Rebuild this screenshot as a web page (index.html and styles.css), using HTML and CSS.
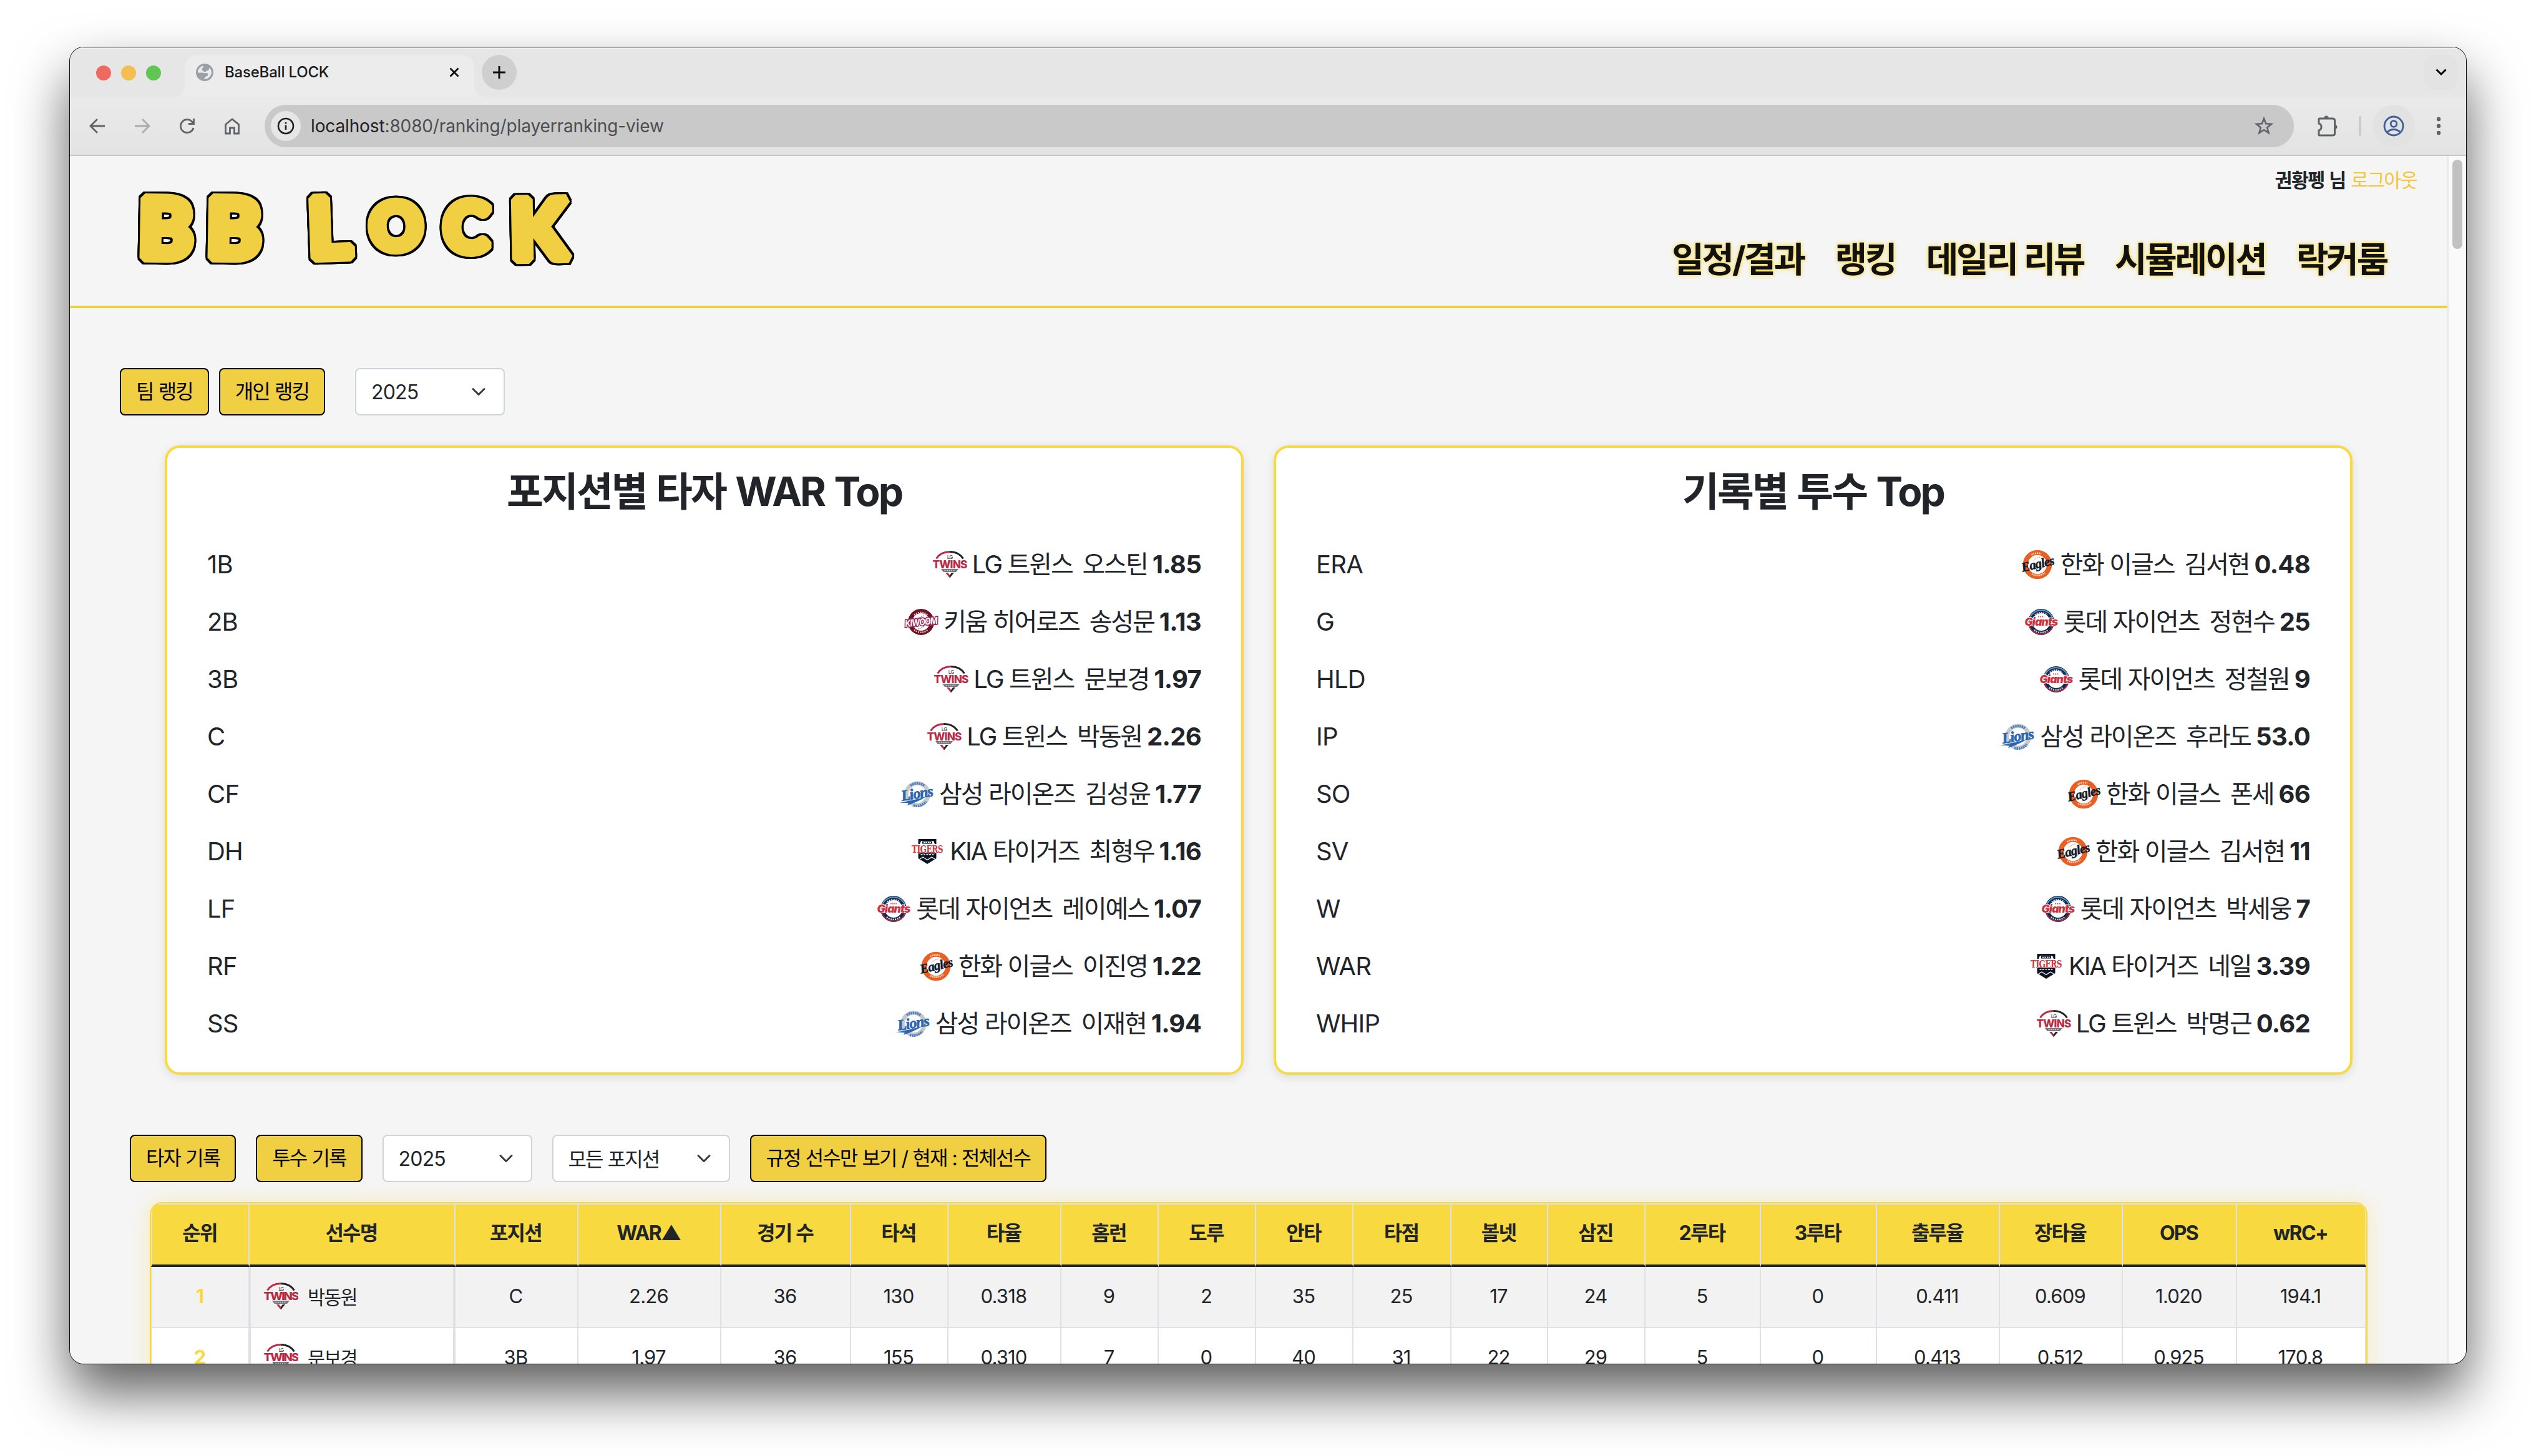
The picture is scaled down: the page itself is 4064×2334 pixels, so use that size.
FILE: index.html
```html
<!DOCTYPE html>
<html lang="ko">
<head>
<meta charset="utf-8">
<title>BaseBall LOCK</title>
<link rel="stylesheet" href="styles.css">
</head>
<body>
<svg class="defs" width="0" height="0" aria-hidden="true">
  <symbol id="twins" viewBox="0 0 56 48">
    <path d="M6.500 14.500C11 7.500 19 3.500 28 3.500" fill="none" stroke="#b72b45" stroke-width="3"/>
    <path d="M28 3.500C37 3.500 45 7.500 49.500 14.500" fill="none" stroke="#222" stroke-width="3"/>
    <text x="28" y="15" font-size="8" text-anchor="middle" fill="#333">LG</text>
    <text x="0.500" y="29.500" font-size="17" font-weight="800" textLength="55" lengthAdjust="spacingAndGlyphs" fill="#b72b45">TWINS</text>
    <path d="M14 31H42L38 36H18Z" fill="#75787b"/>
    <path d="M19.500 33.500H36.500" stroke="#c9cbcc" stroke-width="1.500" stroke-dasharray="2 1.500"/>
    <path d="M21 37H25L28 41V45.500Z" fill="#b72b45"/>
    <path d="M35 37H31L28 41V45.500Z" fill="#222"/>
  </symbol>
  <symbol id="kiwoom" viewBox="0 0 56 48">
    <circle cx="28" cy="24" r="17.500" fill="#fff" stroke="#6d1222" stroke-width="7"/>
    <path d="M17 13A16.500 16.500 0 0 1 39 13M17 36.500A16.500 16.500 0 0 0 39 36.500" fill="none" stroke="#d9b9be" stroke-width="2.500" stroke-dasharray="2 1.500"/>
    <path d="M33 14Q26 16 21 20M35 29Q30 34 23 35" fill="none" stroke="#c98a94" stroke-width="1.500" stroke-dasharray="2 1"/>
    <text x="2" y="29.500" font-size="15" font-weight="700" font-style="italic" textLength="52" lengthAdjust="spacingAndGlyphs" fill="#fff" stroke="#9c2458" stroke-width="3.400" paint-order="stroke" transform="rotate(-6 28 24)">KIWOOM</text>
  </symbol>
  <symbol id="lions" viewBox="0 0 56 48">
    <circle cx="29" cy="24" r="17.500" fill="#fff" stroke="#c6c8ca" stroke-width="6.500"/>
    <path d="M18 10.500A18 18 0 0 1 40 10.500M23 42A18 18 0 0 0 43 36" fill="none" stroke="#4d80c0" stroke-width="4" stroke-dasharray="2.500 1"/>
    <text class="script" x="3" y="31" font-size="24" font-weight="700" font-style="italic" textLength="51" lengthAdjust="spacingAndGlyphs" fill="#2a66b1" stroke="#2a66b1" stroke-width="0.800" transform="rotate(-9 28 24)">Lions</text>
    <path d="M0.500 37.500Q24 34 44 27.500Q31 36 13 42L15 38.500Z" fill="#2a66b1"/>
  </symbol>
  <symbol id="tigers" viewBox="0 0 56 48">
    <path d="M13.500 4H42.500V12H40L38 7H18L16 12H13.500Z" fill="#0c1524"/>
    <path d="M20 9.500H36" stroke="#0c1524" stroke-width="4"/>
    <path d="M22 9.500H34" stroke="#fff" stroke-width="1.500" stroke-dasharray="2.500 1"/>
    <path d="M13.500 26Q28 22 42.500 26V35L28 44L13.500 35Z" fill="#0c1524"/>
    <path d="M16 36L21 33L28 37.500L35 33L40 36" fill="none" stroke="#fff" stroke-width="1.200"/>
    <path d="M17.500 29H38.500" stroke="#fff" stroke-width="1.500" stroke-dasharray="3 1.500"/>
    <text class="slab" x="3" y="25.500" font-size="16" font-weight="700" textLength="50" lengthAdjust="spacingAndGlyphs" fill="#d8343f" stroke="#fff" stroke-width="1.500" paint-order="stroke">TIGERS</text>
  </symbol>
  <symbol id="giants" viewBox="0 0 56 48">
    <circle cx="28" cy="24" r="17.500" fill="#fff" stroke="#13294b" stroke-width="7"/>
    <path d="M9.500 18A19.800 19.800 0 0 1 46.500 18" fill="none" stroke="#5b9bd0" stroke-width="2"/>
    <path d="M9.500 31A19.800 19.800 0 0 0 46.500 31" fill="none" stroke="#b5263a" stroke-width="2"/>
    <path d="M18 13A15.500 15.500 0 0 1 38 13M17 37A17 17 0 0 0 39 37" fill="none" stroke="#d5dbe4" stroke-width="2.500" stroke-dasharray="2 1.500"/>
    <path d="M23 15.500H33" stroke="#d96a74" stroke-width="2" stroke-dasharray="2 1"/>
    <text x="1.500" y="30" font-size="17" font-weight="900" font-style="italic" textLength="53" lengthAdjust="spacingAndGlyphs" fill="#cf2f40" stroke="#fff" stroke-width="2" paint-order="stroke">Giants</text>
  </symbol>
  <symbol id="eagles" viewBox="0 0 56 48">
    <circle cx="28" cy="24" r="19.200" fill="#fff" stroke="#ea6024" stroke-width="8"/>
    <path d="M18.500 8.500A18.500 18.500 0 0 1 34 6.500M19 39A18.500 18.500 0 0 0 40 37" fill="none" stroke="#fbd3bf" stroke-width="2.500" stroke-dasharray="2 1"/>
    <path d="M32 12Q26 13 21 18M38 28Q33 32 25 36" fill="none" stroke="#f2b79b" stroke-width="1.500" stroke-dasharray="2 1"/>
    <text class="script" x="2" y="30" font-size="21" font-weight="700" font-style="italic" textLength="53" lengthAdjust="spacingAndGlyphs" fill="#0b1b2d" stroke="#0b1b2d" stroke-width="0.500" transform="rotate(-13 28 24)">Eagles</text>
  </symbol>
</svg>

<div class="window">
  <div class="tabstrip">
    <div class="lights"><i class="red"></i><i class="amber"></i><i class="green"></i></div>
    <div class="tab">
      <svg class="favicon" viewBox="0 0 28 28"><circle cx="14" cy="14" r="14" fill="#9aa0a6"/><path d="M12 3.500C6.500 4.500 3 9 3 14.500H10.500C12 14.500 13 16 13 17.500H9.500V21C10.500 21.500 11.500 22 11.500 24.500C18 26 25 21 25 13.500C24.500 10 23 8 21 6.500V8.500C20.500 11 18.500 11.500 16.500 11.500C16.500 13.500 14.500 13.500 14 13C11.500 12.500 10.500 10.500 9 9.500C9 7.500 12.500 7 12 3.500Z" fill="#ececec"/><path d="M10 15C13.500 15 15 14.500 18.500 15.500C20.500 17 19 20.500 16.500 20.500C14.500 20.500 15 23 12.500 24.500L9.500 23.500V18.500H5Z" fill="#9aa0a6"/></svg>
      <span class="tab-title">BaseBall LOCK</span>
      <svg class="tab-close" viewBox="0 0 16 16"><path d="M1.500 1.500L14.500 14.500M14.500 1.500L1.500 14.500" stroke="#111" stroke-width="2.800"/></svg>
    </div>
    <div class="newtab"><svg viewBox="0 0 20 20"><path d="M10 0V20M0 10H20" stroke="#111" stroke-width="3"/></svg></div>
    <div class="tabsearch"><svg viewBox="0 0 18 12"><path d="M1.500 1.500L9 9L16.500 1.500" fill="none" stroke="#000" stroke-width="3"/></svg></div>
  </div>

  <div class="toolbar">
    <div class="nav-icons">
      <svg viewBox="0 0 28 28"><path d="M26 14H3.500M14 3L3 14L14 25" fill="none" stroke="#5f6368" stroke-width="2.800"/></svg>
      <svg viewBox="0 0 28 28"><path d="M2 14H24.500M14 3L25 14L14 25" fill="none" stroke="#a9acaf" stroke-width="2.800"/></svg>
      <svg viewBox="0 0 28 28"><path d="M24 17A10.500 10.500 0 1 1 22 7.500L24.500 10.500M24.500 2V10.500H16" fill="none" stroke="#5f6368" stroke-width="2.800"/></svg>
      <svg viewBox="0 0 28 28"><path d="M3.500 11.500L14 3L24.500 11.500V26H17.500V17H10.500V26H3.500Z" fill="none" stroke="#5f6368" stroke-width="2.800"/></svg>
    </div>
    <div class="omnibox">
      <span class="site-info"><svg viewBox="0 0 28 28"><circle cx="14" cy="14" r="12" fill="none" stroke="#1f2023" stroke-width="2.600"/><path d="M14 12.500V20M14 8V10.500" stroke="#1f2023" stroke-width="2.600"/></svg></span>
      <span class="url"><b>localhost</b>:8080/ranking/playerranking-view</span>
      <svg class="star" viewBox="0 0 32 32"><path d="M16 4L19.200 12.200L28 12.800L21.200 18.400L23.500 27L16 22.200L8.500 27L10.800 18.400L4 12.800L12.800 12.200Z" fill="none" stroke="#5f6368" stroke-width="2.600"/></svg>
    </div>
    <svg class="puzzle" viewBox="0 0 34 36"><path d="M4 6H25Q28.500 6 28.500 9V30Q28.500 33 25 33H4Q3 33 3 32V25Q7 24 7 19.500Q7 15 3 14V7Q3 6 4 6Z" fill="none" stroke="#5f6368" stroke-width="3"/><path d="M11 6A4 4.500 0 0 1 19 6ZM28 15.500A4.500 4 0 0 1 28 23.500Z" fill="#5f6368"/></svg>
    <i class="divider"></i>
    <span class="profile"><svg viewBox="0 0 34 34"><circle cx="17" cy="17" r="15" fill="none" stroke="#3f5f98" stroke-width="2.800"/><circle cx="17" cy="13.500" r="4.800" fill="none" stroke="#3f5f98" stroke-width="2.800"/><path d="M6.500 27Q11 22.500 17 22.500T27.500 27" fill="none" stroke="#3f5f98" stroke-width="2.800"/></svg></span>
    <svg class="dots" viewBox="0 0 8 32"><g fill="#5f6368"><circle cx="4" cy="5" r="3.200"/><circle cx="4" cy="16" r="3.200"/><circle cx="4" cy="27" r="3.200"/></g></svg>
  </div>

  <div class="viewport">
    <div class="page">
      <header class="site-header">
        <svg class="brand" viewBox="0 0 740 130" aria-label="BB LOCK">
          <text y="113" font-size="132"><tspan x="13 122" rotate="1 1">BB</tspan> <tspan x="287" y="114" rotate="-2">L</tspan><tspan x="387" y="102" font-size="103" rotate="-3">O</tspan><tspan x="502" y="102" font-size="110" rotate="2">C</tspan><tspan x="610" y="116" rotate="-1">K</tspan></text>
        </svg>
        <div class="header-right">
          <div class="user"><strong>권황펭 님</strong> <a>로그아웃</a></div>
          <nav class="menu"><a>일정/결과</a><a>랭킹</a><a>데일리 리뷰</a><a>시뮬레이션</a><a>락커룸</a></nav>
        </div>
      </header>

      <div class="controls top">
        <button class="btn">팀 랭킹</button>
        <button class="btn">개인 랭킹</button>
        <div class="select year"><span>2025</span><svg viewBox="0 0 16 16"><path d="M2 5l6 6 6-6"/></svg></div>
      </div>

      <div class="cards">
        <section class="card">
          <h2>포지션별 타자 WAR Top</h2>
          <ul>
            <li><span>1B</span><div class="leader"><svg><use href="#twins"/></svg><span>LG 트윈스</span><span>오스틴</span><strong>1.85</strong></div></li>
            <li><span>2B</span><div class="leader"><svg><use href="#kiwoom"/></svg><span>키움 히어로즈</span><span>송성문</span><strong>1.13</strong></div></li>
            <li><span>3B</span><div class="leader"><svg><use href="#twins"/></svg><span>LG 트윈스</span><span>문보경</span><strong>1.97</strong></div></li>
            <li><span>C</span><div class="leader"><svg><use href="#twins"/></svg><span>LG 트윈스</span><span>박동원</span><strong>2.26</strong></div></li>
            <li><span>CF</span><div class="leader"><svg><use href="#lions"/></svg><span>삼성 라이온즈</span><span>김성윤</span><strong>1.77</strong></div></li>
            <li><span>DH</span><div class="leader"><svg><use href="#tigers"/></svg><span>KIA 타이거즈</span><span>최형우</span><strong>1.16</strong></div></li>
            <li><span>LF</span><div class="leader"><svg><use href="#giants"/></svg><span>롯데 자이언츠</span><span>레이예스</span><strong>1.07</strong></div></li>
            <li><span>RF</span><div class="leader"><svg><use href="#eagles"/></svg><span>한화 이글스</span><span>이진영</span><strong>1.22</strong></div></li>
            <li><span>SS</span><div class="leader"><svg><use href="#lions"/></svg><span>삼성 라이온즈</span><span>이재현</span><strong>1.94</strong></div></li>
          </ul>
        </section>
        <section class="card">
          <h2>기록별 투수 Top</h2>
          <ul>
            <li><span>ERA</span><div class="leader"><svg><use href="#eagles"/></svg><span>한화 이글스</span><span>김서현</span><strong>0.48</strong></div></li>
            <li><span>G</span><div class="leader"><svg><use href="#giants"/></svg><span>롯데 자이언츠</span><span>정현수</span><strong>25</strong></div></li>
            <li><span>HLD</span><div class="leader"><svg><use href="#giants"/></svg><span>롯데 자이언츠</span><span>정철원</span><strong>9</strong></div></li>
            <li><span>IP</span><div class="leader"><svg><use href="#lions"/></svg><span>삼성 라이온즈</span><span>후라도</span><strong>53.0</strong></div></li>
            <li><span>SO</span><div class="leader"><svg><use href="#eagles"/></svg><span>한화 이글스</span><span>폰세</span><strong>66</strong></div></li>
            <li><span>SV</span><div class="leader"><svg><use href="#eagles"/></svg><span>한화 이글스</span><span>김서현</span><strong>11</strong></div></li>
            <li><span>W</span><div class="leader"><svg><use href="#giants"/></svg><span>롯데 자이언츠</span><span>박세웅</span><strong>7</strong></div></li>
            <li><span>WAR</span><div class="leader"><svg><use href="#tigers"/></svg><span>KIA 타이거즈</span><span>네일</span><strong>3.39</strong></div></li>
            <li><span>WHIP</span><div class="leader"><svg><use href="#twins"/></svg><span>LG 트윈스</span><span>박명근</span><strong>0.62</strong></div></li>
          </ul>
        </section>
      </div>

      <div class="controls filters">
        <button class="btn">타자 기록</button>
        <button class="btn">투수 기록</button>
        <div class="select year"><span>2025</span><svg viewBox="0 0 16 16"><path d="M2 5l6 6 6-6"/></svg></div>
        <div class="select position"><span>모든 포지션</span><svg viewBox="0 0 16 16"><path d="M2 5l6 6 6-6"/></svg></div>
        <button class="btn">규정 선수만 보기 / 현재 : 전체선수</button>
      </div>

      <div class="table-box">
        <table>
          <colgroup><col class="w158"><col class="w330"><col class="w197"><col class="w229"><col class="w208"><col class="w156"><col class="w181"><col class="w156"><col class="w156"><col class="w156"><col class="w157"><col class="w155"><col class="w156"><col class="w185"><col class="w186"><col class="w197"><col class="w197"><col class="w183"><col class="w207"></colgroup>
          <thead><tr><th>순위</th><th>선수명</th><th>포지션</th><th>WAR▲</th><th>경기 수</th><th>타석</th><th>타율</th><th>홈런</th><th>도루</th><th>안타</th><th>타점</th><th>볼넷</th><th>삼진</th><th>2루타</th><th>3루타</th><th>출루율</th><th>장타율</th><th>OPS</th><th>wRC+</th></tr></thead>
          <tbody>
            <tr><td>1</td><td><div class="player"><svg><use href="#twins"/></svg><span>박동원</span></div></td><td>C</td><td>2.26</td><td>36</td><td>130</td><td>0.318</td><td>9</td><td>2</td><td>35</td><td>25</td><td>17</td><td>24</td><td>5</td><td>0</td><td>0.411</td><td>0.609</td><td>1.020</td><td>194.1</td></tr>
            <tr><td>2</td><td><div class="player"><svg><use href="#twins"/></svg><span>문보경</span></div></td><td>3B</td><td>1.97</td><td>36</td><td>155</td><td>0.310</td><td>7</td><td>0</td><td>40</td><td>31</td><td>22</td><td>29</td><td>5</td><td>0</td><td>0.413</td><td>0.512</td><td>0.925</td><td>170.8</td></tr>
          </tbody>
        </table>
      </div>
    </div>
    <div class="scrollbar"><i></i></div>
  </div>
</div>
</body>
</html>
```
FILE: styles.css
```css
* { box-sizing: border-box; }

body {
  margin: 0;
  width: 4064px;
  height: 2334px;
  padding: 76px 112px 0;
  overflow: hidden;
  background: #fff;
  color: #212529;
  font-family: "Inter", "Noto Sans CJK KR", sans-serif;
}

.defs { display: none; }
.script { font-family: "Liberation Serif", serif; }
.slab { font-family: "DejaVu Serif", serif; }

/* Browser window */
.window {
  width: 3840px;
  height: 2110px;
  display: flex;
  flex-direction: column;
  overflow: hidden;
  border-radius: 22px;
  background: #f5f5f5;
  box-shadow: 0 0 0 1px #111, 0 46px 88px rgba(0, 0, 0, .64);
}

.tabstrip {
  height: 80px;
  flex: none;
  display: flex;
  align-items: flex-start;
  padding: 12px 13px 0 42px;
  background: #e6e6e6;
  box-shadow: inset 0 2px 0 #f6f6f6;
}
.lights { display: flex; gap: 16px; padding-top: 17px; width: 142px; }
.lights i { width: 24px; height: 24px; border-radius: 50%; }
.red { background: #ed6a5e; }
.amber { background: #f5bf4f; }
.green { background: #61c554; }

.tab {
  position: relative;
  width: 464px;
  height: 68px;
  padding: 14px 24px 0 18px;
  display: flex;
  align-items: flex-start;
  background: #ececec;
  border-radius: 20px 20px 0 0;
}
.tab::before, .tab::after {
  content: "";
  position: absolute;
  bottom: 0;
  width: 20px;
  height: 20px;
}
.tab::before { left: -20px; background: radial-gradient(circle at 0 0, transparent 19.5px, #ebebeb 20px); }
.tab::after { right: -20px; background: radial-gradient(circle at 100% 0, transparent 19.5px, #ebebeb 20px); }
.favicon { width: 28px; height: 28px; }
.tab-title { margin-left: 18px; font-size: 24px; line-height: 28px; font-weight: 500; letter-spacing: -.2px; color: #1a1a1a; }
.tab-close { width: 16px; height: 16px; margin: 6px 0 0 auto; }
.newtab {
  width: 56px; height: 56px; margin-left: 12px;
  display: grid; place-items: center;
  border-radius: 50%; background: #cfcfcf;
}
.newtab svg { width: 20px; height: 20px; }
.tabsearch {
  width: 55px; height: 56px; margin-left: auto;
  display: grid; place-items: center;
  border-radius: 18px; background: #e3e3e3;
}
.tabsearch svg { width: 18px; height: 12px; }

.toolbar {
  height: 94px;
  flex: none;
  display: flex;
  align-items: center;
  padding: 0 40px 0 30px;
  background: linear-gradient(#eaeaea, #e3e3e3);
  border-bottom: 2px solid #c6c6c6;
}
.nav-icons { display: flex; gap: 44px; width: 282px; }
.nav-icons svg { width: 28px; height: 28px; }
.omnibox {
  width: 3252px; height: 68px;
  display: flex; align-items: center;
  padding: 0 32px 0 10px;
  border-radius: 34px;
  background: #c9c9c9;
}
.site-info { width: 48px; height: 48px; display: grid; place-items: center; border-radius: 50%; background: #e6e6e6; }
.site-info svg { width: 28px; height: 28px; }
.url { margin-left: 16px; font-size: 28px; color: #4c4e51; letter-spacing: -.13px; }
.url b { font-weight: 400; color: #1f2023; }
.star { width: 32px; height: 32px; margin-left: auto; }
.puzzle { width: 34px; height: 36px; margin-left: 37px; }
.divider { width: 4px; height: 32px; margin-left: 33px; border-radius: 2px; background: #cbcbcb; }
.profile { width: 68px; height: 68px; margin-left: 18px; display: grid; place-items: center; border-radius: 50%; background: #e2e2e2; }
.profile svg { width: 34px; height: 34px; }
.dots { width: 8px; height: 32px; margin-left: 34px; }

.viewport { flex: 1; display: flex; min-height: 0; }
.page { width: 3810px; overflow: hidden; background: #f5f5f5; }
.scrollbar { width: 30px; padding: 6px 0 0 6px; background: #fafafa; border-left: 2px solid #e8e8e8; }
.scrollbar i { display: block; width: 16px; height: 143px; border-radius: 8px; background: #c1c1c1; }

/* Site header */
.site-header {
  height: 244px;
  display: flex;
  justify-content: space-between;
  padding: 50px 0 0 96px;
  border-bottom: 4px solid #f1cf42;
}
.brand { width: 740px; height: 130px; overflow: visible; }
.brand text {
  font-family: "Lato", sans-serif;
  font-weight: 900;
  fill: #f1cf42;
  stroke: #f1cf42;
  stroke-width: 15px;
  stroke-linejoin: bevel;
  filter: drop-shadow(3px 0 0 #000) drop-shadow(-3px 0 0 #000) drop-shadow(0 3px 0 #000) drop-shadow(0 -3px 0 #000);
}
.header-right { margin-top: -50px; }
.user { height: 76px; padding-right: 49px; text-align: right; font-size: 30.4px; line-height: 79px; letter-spacing: -1.6px; word-spacing: 2px; }
.user strong { font-weight: 700; }
.user a { color: #f6c33c; }
.menu { display: flex; justify-content: flex-end; gap: 49.5px; padding-right: 97px; }
.menu a {
  font-size: 56px;
  line-height: 84px;
  margin-top: 48px;
  font-weight: 700;
  letter-spacing: -3.2px;
  word-spacing: 1px;
  color: #111;
  text-shadow: 0 0 4px #f8da40, 0 0 8px rgba(248, 218, 64, .6);
}

/* Controls */
.controls { display: flex; }
.controls.top { padding: 96px 0 0 80px; gap: 16px; }
.controls.top .select { margin-left: 32px; }
.controls.filters { padding: 96px 0 0 96px; gap: 32px; }
.btn {
  height: 76px;
  padding: 0 24px;
  border: 2px solid #000;
  border-radius: 8px;
  background: #f1cf42;
  color: #000;
  font: 400 32px/48px "Inter", "Noto Sans CJK KR", sans-serif;
  letter-spacing: -1.9px;
  word-spacing: 1px;
  white-space: nowrap;
}
.select {
  height: 76px;
  display: flex;
  align-items: center;
  justify-content: space-between;
  padding: 0 28px 0 24px;
  border: 2px solid #ced4da;
  border-radius: 8px;
  background: #fff;
  font-size: 32px;
  letter-spacing: -.8px;
}
.select svg { width: 24px; height: 24px; }
.select path { fill: none; stroke: #343a40; stroke-width: 2; stroke-linecap: round; stroke-linejoin: round; }
.year { width: 240px; }
.position { width: 285px; letter-spacing: -1.9px; word-spacing: 1px; }
.position span { margin-top: -2px; }

/* Leader cards */
.cards { display: flex; gap: 48px; margin: 48px 152px 0; }
.card {
  flex: 1;
  height: 1009px;
  padding: 31px 64px;
  border: 4px solid #f8da40;
  border-radius: 24px;
  background: #fff;
  box-shadow: 0 4px 16px rgba(0, 0, 0, .1);
}
.card h2 { margin: 0 0 33px; font-size: 64px; line-height: 77px; font-weight: 700; letter-spacing: -2.9px; word-spacing: 3px; text-align: center; }
.card ul { margin: 0; padding: 0; list-style: none; }
.card li { height: 92px; display: flex; align-items: center; justify-content: space-between; font-size: 40px; line-height: 60px; letter-spacing: -.8px; }
.leader { display: flex; align-items: center; }
.leader svg { width: 56px; height: 48px; margin-right: 8px; }
.leader span { letter-spacing: -2.1px; word-spacing: .4px; }
.leader span + span { margin-left: 16px; }
.leader strong { margin-left: 8px; font-weight: 700; letter-spacing: -.7px; }

/* Batting table */
.table-box {
  width: 3554px;
  height: 700px;
  margin: 32px 0 0 128px;
  overflow: hidden;
  border: 2px solid #f8da40;
  border-radius: 20px;
  background: #fff;
  box-shadow: 0 0 32px rgba(248, 218, 64, .35);
}
table { width: 3550px; table-layout: fixed; border-collapse: separate; border-spacing: 0; }
th, td { padding: 0 2px 3px 0; border-right: 2px solid #dee2e6; text-align: center; }
th:first-child, td:first-child { border-left: 2px solid #dee2e6; }
th {
  height: 102px;
  padding-bottom: 5px;
  border-top: 2px solid #dee2e6;
  border-bottom: 4px solid #212529;
  background: #f8da40;
  font-size: 32px;
  line-height: 48px;
  font-weight: 700;
  letter-spacing: -1.7px;
  word-spacing: 1px;
}
td { height: 98px; border-bottom: 2px solid #dee2e6; font-size: 31px; letter-spacing: -.8px; }
tbody tr:nth-child(odd) { background: #f2f2f2; }
td:first-child { font-weight: 700; color: #f8da40; }
td:nth-child(2) { border-left: 2px solid #dee2e6; border-right-width: 4px; }
.player { display: flex; align-items: center; padding-left: 20px; font-size: 30.4px; letter-spacing: -1.7px; }
.player svg { width: 56px; height: 48px; margin-right: 15px; }
.w155 { width: 155px; } .w156 { width: 156px; } .w157 { width: 157px; } .w158 { width: 158px; }
.w181 { width: 181px; } .w183 { width: 183px; } .w185 { width: 185px; } .w186 { width: 186px; }
.w197 { width: 197px; } .w207 { width: 207px; } .w208 { width: 208px; } .w229 { width: 229px; } .w330 { width: 330px; }
```
